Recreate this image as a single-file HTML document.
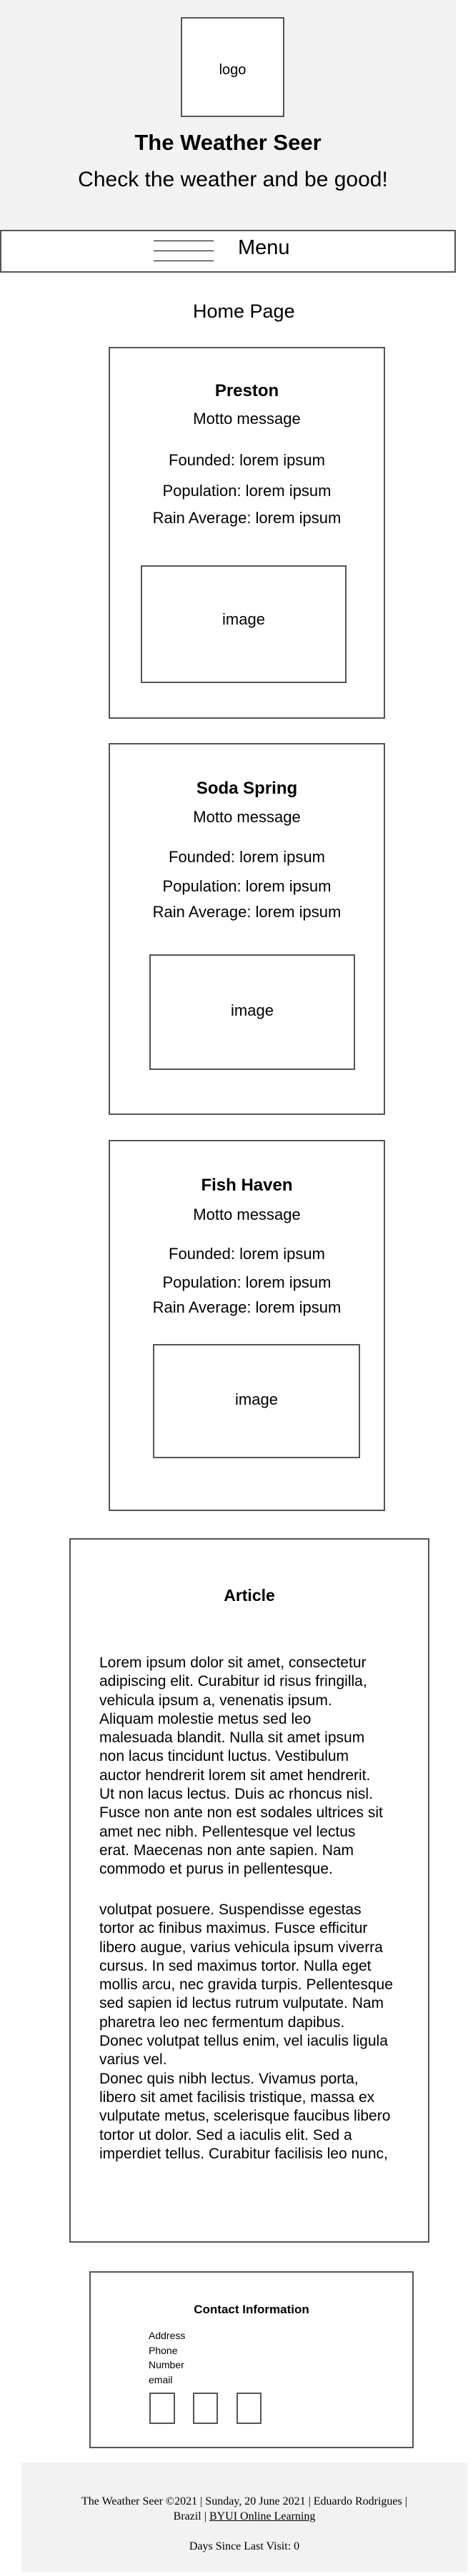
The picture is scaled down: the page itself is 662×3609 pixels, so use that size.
<!DOCTYPE html>
<html><head><meta charset="utf-8"><style>
*{margin:0;padding:0;box-sizing:border-box}
body{width:662px;height:3609px;position:relative;background:#fff;font-family:"Liberation Sans",sans-serif;color:#000;overflow:hidden}
.a{position:absolute}
.box{position:absolute;border:2px solid #555;background:#fff}
.c{position:absolute;left:0;right:0;text-align:center;white-space:nowrap}
.t{position:absolute;white-space:nowrap}
.line{position:absolute;height:1px;background:#000}
</style></head><body>
<div class="a" style="left:0;top:0;width:638px;height:322px;background:#f2f2f2"></div>
<div class="box" style="left:253px;top:24px;width:145px;height:140px"></div>
<div class="t" style="left:253px;width:145px;text-align:center;top:86px;font-size:20px;line-height:24px">logo</div>
<div class="t" style="left:0;width:638px;text-align:center;top:182px;font-size:31px;line-height:36px;font-weight:bold">The Weather Seer</div>
<div class="t" style="left:0;width:652px;text-align:center;top:234px;font-size:30px;line-height:36px">Check the weather and be good!</div>

<div class="box" style="left:0;top:322px;width:638px;height:60px"></div>
<div class="line" style="left:215px;top:337px;width:84px"></div>
<div class="line" style="left:215px;top:351px;width:84px"></div>
<div class="line" style="left:215px;top:365px;width:84px"></div>
<div class="t" style="left:333px;top:329px;font-size:29px;line-height:36px">Menu</div>

<div class="t" style="left:270px;top:419px;font-size:27px;line-height:34px">Home Page</div>

<!-- card 1 -->
<div class="box" style="left:152px;top:486px;width:387px;height:521px">
 <div class="c" style="top:46px;font-size:24px;line-height:28px;font-weight:bold">Preston</div>
 <div class="c" style="top:86px;font-size:22px;line-height:26px">Motto message</div>
 <div class="c" style="top:144px;font-size:22px;line-height:26px">Founded: lorem ipsum</div>
 <div class="c" style="top:187px;font-size:22px;line-height:26px">Population: lorem ipsum</div>
 <div class="c" style="top:225px;font-size:22px;line-height:26px">Rain Average: lorem ipsum</div>
 <div class="box" style="left:43px;top:304px;width:288px;height:165px"><div class="c" style="top:61px;font-size:22px;line-height:26px">image</div></div>
</div>
<!-- card 2 -->
<div class="box" style="left:152px;top:1041px;width:387px;height:521px">
 <div class="c" style="top:48px;font-size:24px;line-height:28px;font-weight:bold">Soda Spring</div>
 <div class="c" style="top:89px;font-size:22px;line-height:26px">Motto message</div>
 <div class="c" style="top:145px;font-size:22px;line-height:26px">Founded: lorem ipsum</div>
 <div class="c" style="top:186px;font-size:22px;line-height:26px">Population: lorem ipsum</div>
 <div class="c" style="top:222px;font-size:22px;line-height:26px">Rain Average: lorem ipsum</div>
 <div class="box" style="left:55px;top:294px;width:288px;height:162px"><div class="c" style="top:64px;font-size:22px;line-height:26px">image</div></div>
</div>
<!-- card 3 -->
<div class="box" style="left:152px;top:1597px;width:387px;height:520px">
 <div class="c" style="top:48px;font-size:24px;line-height:28px;font-weight:bold">Fish Haven</div>
 <div class="c" style="top:90px;font-size:22px;line-height:26px">Motto message</div>
 <div class="c" style="top:145px;font-size:22px;line-height:26px">Founded: lorem ipsum</div>
 <div class="c" style="top:185px;font-size:22px;line-height:26px">Population: lorem ipsum</div>
 <div class="c" style="top:220px;font-size:22px;line-height:26px">Rain Average: lorem ipsum</div>
 <div class="box" style="left:60px;top:284px;width:290px;height:160px"><div class="c" style="top:63px;font-size:22px;line-height:26px">image</div></div>
</div>

<!-- article -->
<div class="box" style="left:97px;top:2155px;width:504px;height:987px"></div>
<div class="t" style="left:97px;width:504px;text-align:center;top:2221px;font-size:23px;line-height:28px;font-weight:bold">Article</div>
<div class="t" style="left:139px;top:2317px;font-size:21px;line-height:26.3px">Lorem ipsum dolor sit amet, consectetur<br>adipiscing elit. Curabitur id risus fringilla,<br>vehicula ipsum a, venenatis ipsum.<br>Aliquam molestie metus sed leo<br>malesuada blandit. Nulla sit amet ipsum<br>non lacus tincidunt luctus. Vestibulum<br>auctor hendrerit lorem sit amet hendrerit.<br>Ut non lacus lectus. Duis ac rhoncus nisl.<br>Fusce non ante non est sodales ultrices sit<br>amet nec nibh. Pellentesque vel lectus<br>erat. Maecenas non ante sapien. Nam<br>commodo et purus in pellentesque.</div>
<div class="t" style="left:139px;top:2663px;font-size:21px;line-height:26.3px">volutpat posuere. Suspendisse egestas<br>tortor ac finibus maximus. Fusce efficitur<br>libero augue, varius vehicula ipsum viverra<br>cursus. In sed maximus tortor. Nulla eget<br>mollis arcu, nec gravida turpis. Pellentesque<br>sed sapien id lectus rutrum vulputate. Nam<br>pharetra leo nec fermentum dapibus.<br>Donec volutpat tellus enim, vel iaculis ligula<br>varius vel.<br>Donec quis nibh lectus. Vivamus porta,<br>libero sit amet facilisis tristique, massa ex<br>vulputate metus, scelerisque faucibus libero<br>tortor ut dolor. Sed a iaculis elit. Sed a<br>imperdiet tellus. Curabitur facilisis leo nunc,</div>

<!-- contact -->
<div class="box" style="left:125px;top:3182px;width:454px;height:248px"></div>
<div class="t" style="left:125px;width:454px;text-align:center;top:3225px;font-size:17px;line-height:22px;font-weight:bold">Contact Information</div>
<div class="t" style="left:208px;top:3262px;font-size:14px;line-height:20.5px">Address<br>Phone<br>Number<br>email</div>
<div class="box" style="left:209px;top:3352px;width:36px;height:44px"></div>
<div class="box" style="left:270px;top:3352px;width:35px;height:44px"></div>
<div class="box" style="left:331px;top:3352px;width:35px;height:44px"></div>

<!-- footer -->
<div class="a" style="left:30px;top:3450px;width:624px;height:153px;background:#f2f2f2"></div>
<div class="t" style="left:30px;width:624px;text-align:center;top:3494px;font-family:'Liberation Serif',serif;font-size:16px;line-height:21px">The Weather Seer ©2021 | Sunday, 20 June 2021 | Eduardo Rodrigues |<br>Brazil | <span style="text-decoration:underline">BYUI Online Learning</span></div>
<div class="t" style="left:30px;width:624px;text-align:center;top:3557px;font-family:'Liberation Serif',serif;font-size:16px;line-height:21px">Days Since Last Visit: 0</div>
</body></html>
